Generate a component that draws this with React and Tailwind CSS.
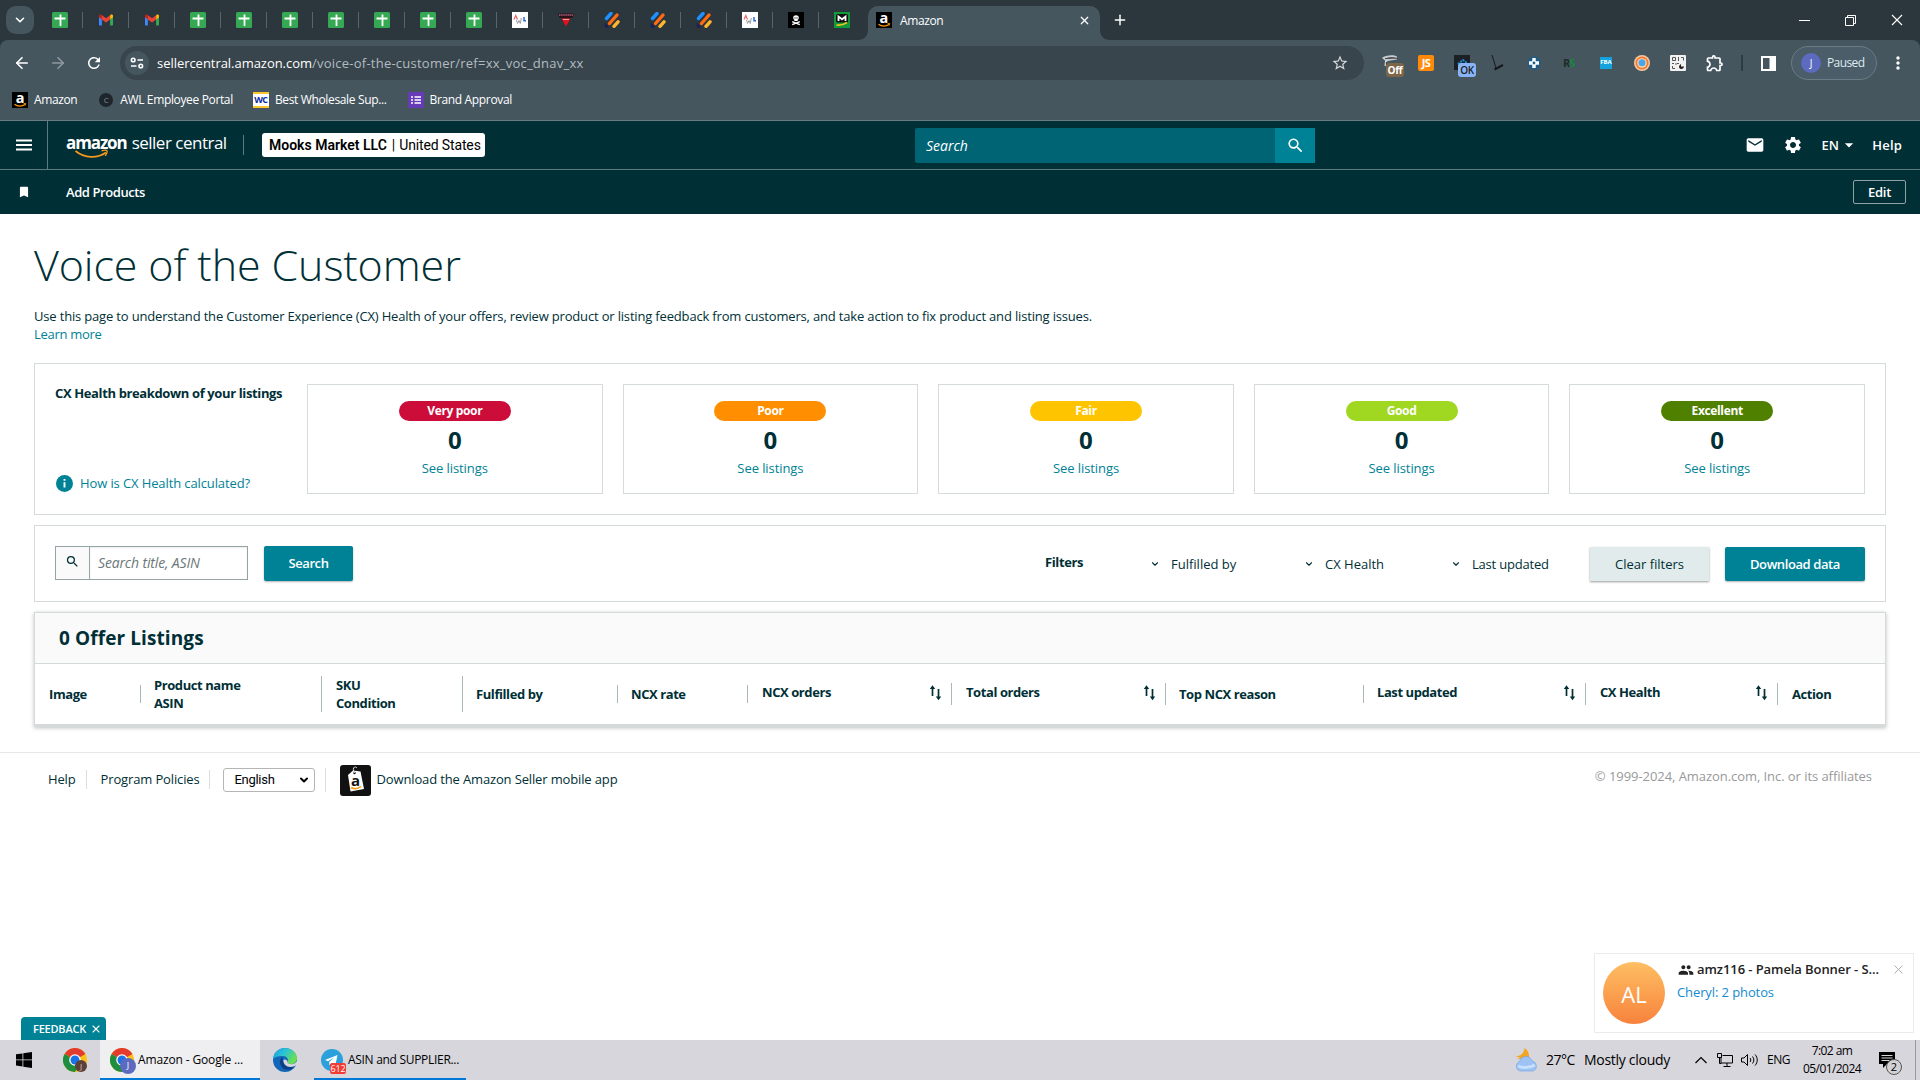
import { ArrowLeft, ArrowRight, ChevronDown, Plus, X } from "lucide-react"
import { MdRefresh, MdSettings, MdMail, MdStarBorder, MdMoreVert, MdPeople, MdSearch, MdBookmark, MdOutlineExtension, MdArrowDropDown } from "react-icons/md"

const tabs = ["sheets", "gmail", "gmail", "sheets", "sheets", "sheets", "sheets", "sheets", "sheets", "sheets", "awl", "devil", "stripes", "stripes", "stripes", "awl", "skull", "market"]

const ratings = [
  { label: "Very poor", color: "bg-[#cc0c39]" },
  { label: "Poor", color: "bg-[#ff8f00]" },
  { label: "Fair", color: "bg-[#ffc400]" },
  { label: "Good", color: "bg-[#a0d720]" },
  { label: "Excellent", color: "bg-[#508000]" }
]

const columns = [
  { lines: ["Image"], width: "w-[106px] pl-[14px]" },
  { lines: ["Product name", "ASIN"], width: "w-[181px] pl-[13px]" },
  { lines: ["SKU", "Condition"], width: "w-[141px] pl-[14px]" },
  { lines: ["Fulfilled by"], width: "w-[155px] pl-[13px]" },
  { lines: ["NCX rate"], width: "w-[130px] pl-[13px]" },
  { lines: ["NCX orders"], width: "w-[204px] pl-[14px]", sort: true },
  { lines: ["Total orders"], width: "w-[214px] pl-[14px]", sort: true },
  { lines: ["Top NCX reason"], width: "w-[198px] pl-[13px]" },
  { lines: ["Last updated"], width: "w-[222px] pl-[13px]", sort: true },
  { lines: ["CX Health"], width: "w-[192px] pl-[14px]", sort: true },
  { lines: ["Action"], width: "flex-1 pl-[14px]", last: true }
]

const AmazonIcon = () => (
  <svg width="16" height="16" viewBox="0 0 16 16" className="shrink-0 overflow-visible">
    <rect width="16" height="16" fill="#000" />
    <text x="8" y="10.6" textAnchor="middle" fontSize="14.5" fontWeight="700" fill="#fff" fontFamily="Open Sans, sans-serif">a</text>
    <path d="M2.500 12.200c3 2.400 7.500 2.400 10.500.3" stroke="#f90" strokeWidth="1.300" fill="none" />
    <path d="M11.600 11.600l2.200-.1-.8 2" stroke="#f90" strokeWidth=".9" fill="none" />
  </svg>
)

const Favicon = ({ kind }) => {
  if (kind === "sheets") {
    return (
      <svg width="16" height="16" viewBox="0 0 16 16">
        <rect width="16" height="16" rx="1.500" fill="#34a853" />
        <path d="M8.500 2.500V14M2.500 6.500h11" stroke="#fff" strokeWidth="1.800" />
      </svg>
    )
  }
  if (kind === "gmail") {
    return (
      <svg width="16" height="16" viewBox="0 0 16 16">
        <path d="M1 4.500v8.200c0 .5.4.8.8.8h2.100V7z" fill="#4285f4" />
        <path d="M15 4.500v8.200c0 .5-.4.8-.8.8h-2.100V7z" fill="#34a853" />
        <path d="M12.100 3.200v4.200L15 5.200V4c0-1.500-1.600-1.800-2.500-1.100z" fill="#fbbc04" />
        <path d="M1 5.200l2.900 2.200V3.200l-.4-.3C2.600 2.200 1 2.500 1 4z" fill="#c5221f" />
        <path d="M3.900 3.200L8 6.300l4.100-3.100v4.200L8 10.500 3.900 7.400z" fill="#ea4335" />
      </svg>
    )
  }
  if (kind === "awl") {
    return (
      <svg width="16" height="16" viewBox="0 0 16 16">
        <rect width="16" height="16" fill="#fff" />
        <path d="M2 7.500L3.800 3.500l1.700 4" stroke="#e46a6c" strokeWidth="1.200" fill="none" />
        <path d="M4.500 8l1 3.500L7 8.500l1.300 3L9.300 6" stroke="#9a9ea3" strokeWidth="1" fill="none" />
        <path d="M12 5v3.700h2" stroke="#2f6bd0" strokeWidth="1.500" fill="none" />
      </svg>
    )
  }
  if (kind === "devil") {
    return (
      <svg width="16" height="16" viewBox="0 0 16 16">
        <path d="M0 1.500h16L14.500 6h-13z" fill="#2a1218" />
        <path d="M1 3h14" stroke="#b0607a" strokeWidth="1.400" strokeDasharray="1.500 .6" />
        <path d="M3.500 6.500h9L8 14.500z" fill="#e8101c" />
        <path d="M5 7.500h6" stroke="#ffb0b0" strokeWidth=".9" />
      </svg>
    )
  }
  if (kind === "stripes") {
    return (
      <svg width="16" height="16" viewBox="0 0 16 16" strokeLinecap="round" strokeWidth="3.400">
        <path d="M.8 10.500v5h4.500z" fill="#1d1d5c" />
        <path d="M2.500 6.500l4.500-5" stroke="#1e90ff" />
        <path d="M5.500 11.500l7.500-8.500" stroke="#ff6a13" />
        <path d="M10 14.300l4-4.500" stroke="#ffb52e" />
      </svg>
    )
  }
  if (kind === "skull") {
    return (
      <svg width="16" height="16" viewBox="0 0 16 16">
        <rect width="16" height="16" fill="#000" />
        <path d="M5.200 5.700C5.200 2.500 10.800 2.500 10.800 5.700c0 1.300-.7 1.800-1.100 2.100v1.200H6.300V7.800c-.4-.3-1.100-.8-1.100-2.100z" fill="#fff" />
        <path d="M4.200 9.600l7.600 3M11.800 9.600l-7.600 3" stroke="#fff" strokeWidth="1.500" />
        <circle cx="7" cy="5.900" r=".6" /><circle cx="9" cy="5.900" r=".6" />
      </svg>
    )
  }
  return (
    <svg width="16" height="16" viewBox="0 0 16 16">
      <rect width="16" height="16" fill="#0f9a3c" />
      <rect x="2" y="2" width="12" height="8.500" rx="1.500" fill="#111" />
      <path d="M4.500 9V4.500L8 7.300l3.500-2.800V9" stroke="#fff" strokeWidth="1.800" fill="none" />
      <path d="M2.500 13c4 .6 7-.2 10.500-2.500" stroke="#f2c21a" strokeWidth="1.600" fill="none" />
    </svg>
  )
}

const TabStrip = () => (
  <div className="flex h-10 bg-[#2c373d] pl-[6px]">
    <div className="mt-[6px] flex h-7 w-7 items-center justify-center rounded-[10px] bg-[#45565f]">
      <ChevronDown size={14} strokeWidth={2.800} color="#fff" />
    </div>
    <div className="ml-[3px] flex">
      {tabs.map((kind, index) => (
        <div key={index} className="flex h-10 w-[46px] items-center pl-[15px]">
          <Favicon kind={kind} />
          {index < tabs.length - 1 && <span className="ml-[14px] h-4 w-px bg-[#55666f]" />}
        </div>
      ))}
    </div>
    <div className="relative ml-[3px] mt-[6px] flex h-[34px] w-[232px] items-center rounded-t-[10px] bg-[#45565f] pl-2">
      <svg className="absolute -left-[10px] bottom-0" width="10" height="10"><path d="M10 0v10H0C6 10 10 6 10 0z" fill="#45565f" /></svg>
      <svg className="absolute -right-[10px] bottom-0" width="10" height="10"><path d="M0 0v10h10C4 10 0 6 0 0z" fill="#45565f" /></svg>
      <div className="-mt-[6px]"><AmazonIcon /></div>
      <span className="-mt-[4px] ml-2 text-[12px] tracking-[-0.4px] text-white">Amazon</span>
      <X size={13} strokeWidth={2.200} color="#fff" className="-mt-[6px] ml-auto mr-[9px]" />
    </div>
    <Plus size={16} strokeWidth={2.200} color="#fff" className="ml-[12px] mt-3" />
    <div className="ml-auto flex items-center gap-[35px] pr-[17px]">
      <svg width="11" height="11"><path d="M0 5.500h11" stroke="#fff" /></svg>
      <svg width="11" height="11" fill="none" stroke="#fff"><path d="M.5 2.500h8v8h-8zM2.500 2.500v-2h8v8h-2" /></svg>
      <svg width="12" height="12" stroke="#fff" strokeWidth="1.100"><path d="M1 1l10 10M11 1L1 11" /></svg>
    </div>
  </div>
)

const Extensions = () => (
  <div className="flex items-center">
    <div className="relative ml-[17px] h-6 w-[26px]">
      <svg width="20" height="16" viewBox="0 0 20 16" className="mt-[3px]">
        <path d="M1 4c3-3 12-3.500 15-1.500v3L6.500 7 5 12H3.500L4 6.500z" fill="#c9cdd0" />
        <path d="M4 4.800c4-1.300 8-1.300 12-.5M5.500 8v5" stroke="#3a3f42" />
      </svg>
      <span className="absolute left-[5px] top-3 flex h-[14px] w-[18px] items-center justify-center rounded-[3px] bg-[#7d6548] text-[10px] font-bold leading-none tracking-[-0.3px] text-white">Off</span>
    </div>
    <div className="ml-[11px] flex h-4 w-4 items-center justify-center rounded-[2px] bg-[#ff8a0a] text-[11px] font-bold tracking-[-0.5px] text-white">JS</div>
    <div className="relative ml-5 h-6 w-6">
      <div className="mt-1 h-[15px] w-4 bg-[#1c1f24]"><svg width="16" height="15"><path d="M4 9l5-4 4 3" stroke="#1d8fd6" strokeWidth="2" fill="none" strokeDasharray="2 1" /></svg></div>
      <span className="absolute left-[4px] top-3 flex h-[14px] w-[18px] items-center justify-center rounded-[3px] bg-[#8ab4f8] text-[10px] font-semibold leading-none tracking-[-0.3px] text-[#202124]">OK</span>
    </div>
    <svg className="ml-[12px]" width="16" height="16" fill="none" stroke="#16191b"><path d="M2 0l4 13" /><path d="M4.500 14.500l8.500-4.500" strokeWidth="2" /></svg>
    <svg className="ml-5" width="16" height="16"><circle cx="8" cy="8" r="6.500" fill="#1e5c8a" /><path d="M8 3v10M3 8h10" stroke="#fff" strokeWidth="3.400" /><circle cx="8" cy="8" r="1.400" fill="#1e5c8a" /></svg>
    <div className="ml-[21px] w-4 text-[11px] font-bold leading-4 tracking-[-1px] text-[#1d2b2b]">R<span className="text-[#168a3a]">S</span></div>
    <div className="ml-[21px] flex h-3 w-3 flex-col items-center bg-[#14a3dc] text-[6px] font-bold leading-[10px] text-white">FBA</div>
    <svg className="ml-[22px]" width="16" height="16"><circle cx="8" cy="8" r="8" fill="#f6c7a2" /><circle cx="8" cy="8" r="6.500" fill="#f07a2a" /><circle cx="8" cy="8" r="4.800" fill="#f9d3b4" /><circle cx="8" cy="7.800" r="3.500" fill="#4aa6ea" /></svg>
    <svg className="ml-5" width="16" height="16"><rect width="16" height="16" rx="1" fill="#f1f1f1" /><path d="M2.500 2.500h3v3h-3zM8.500 2v4M11 2.500h2.500v3M2 8.500h2M6 8v2M2.500 11v2.500H5M7 8.500h2" stroke="#555" strokeWidth="1" fill="none" /><path d="M11 9v2.500h3c0 3-4.500 3.500-5 .5 0-1.500 1-2.500 2-3z" fill="#222" /></svg>
    <MdOutlineExtension className="ml-[19px]" size={20} color="#fff" />
    <span className="ml-[16px] h-4 w-[2px] bg-[#2f3c43]" />
    <svg className="ml-[18px]" width="15" height="15"><path d="M1 1h13v13H1z" fill="none" stroke="#fff" strokeWidth="2" /><path d="M8.500 1H14v13H8.500z" fill="#fff" /></svg>
  </div>
)

const Toolbar = () => (
  <div className="bg-[#2c373d]">
    <div className="flex h-12 items-center rounded-t-lg bg-[#45565f] pb-[2px] pl-[13px]">
      <ArrowLeft size={18} strokeWidth={2.200} color="#fff" />
      <ArrowRight size={18} strokeWidth={2.200} color="#8e999f" className="ml-[18px]" />
      <MdRefresh size={18} color="#fff" className="ml-[18px]" />
      <div className="ml-[17px] flex h-[34px] w-[1244px] items-center rounded-full bg-[#38454c] pl-[5px] pr-[15px]">
        <span className="flex h-6 w-6 items-center justify-center rounded-full bg-[#45565f]">
          <svg width="14" height="12" viewBox="0 0 14 12" fill="none" stroke="#fff" strokeWidth="1.600"><circle cx="3.200" cy="3" r="1.800" /><path d="M7.500 3H13M1 9h5.500" /><circle cx="10.800" cy="9" r="1.800" /></svg>
        </span>
        <span className="ml-2 pt-px text-[13px] tracking-[0.24px] text-[#b3bcc1]"><span className="tracking-[-0.04px] text-white">sellercentral.amazon.com</span>/voice-of-the-customer/ref=xx_voc_dnav_xx</span>
        <MdStarBorder size={18} color="#d3d8da" className="ml-auto" />
      </div>
      <Extensions />
      <div className="ml-[15px] flex h-[34px] w-[86px] items-center rounded-full border border-[#6b7c85] bg-[#4a5d68] pl-[9px]">
        <span className="flex h-5 w-5 items-center justify-center rounded-full bg-[#5c6bc0] text-[10px] text-white">J</span>
        <span className="ml-[6px] text-[12px] tracking-[-0.6px] text-[#dfeaf2]">Paused</span>
      </div>
      <MdMoreVert size={20} color="#fff" className="ml-[11px]" />
    </div>
    <div className="flex h-8 items-start bg-[#45565f] pl-3 pt-[4px] text-[12px] leading-4 tracking-[-0.35px] text-white">
      <AmazonIcon />
      <span className="ml-[6px] tracking-[-0.4px]">Amazon</span>
      <span className="ml-[22px] mt-px flex h-[14px] w-[14px] items-center justify-center rounded-full bg-[#1e252b] text-[8px] text-[#7d8a94]">C</span>
      <span className="ml-[7px]">AWL Employee Portal</span>
      <span className="ml-[20px] flex h-4 w-4 items-center justify-center border-y-2 border-[#fcc72c] bg-white text-[9px] font-bold tracking-[-0.5px] text-[#0c2ea0]">WC</span>
      <span className="ml-[6px]">Best Wholesale Sup...</span>
      <span className="ml-[21px] flex h-4 w-4 items-center justify-center bg-[#673ab7]">
        <svg width="10" height="8"><path d="M0 1h2M3.500 1H10M0 4h2M3.500 4H10M0 7h2M3.500 7H10" stroke="#fff" strokeWidth="1.500" /></svg>
      </span>
      <span className="ml-[6px]">Brand Approval</span>
    </div>
  </div>
)

const SellerHeader = () => (
  <header className="border-t border-[#6a7c80] bg-[#002f36] text-white">
    <div className="flex h-[49px] items-center border-b border-[#5c7a7f]">
      <div className="flex h-full w-12 items-center justify-center border-r border-[#5c7a7f]">
        <svg width="16" height="12" stroke="#fff" strokeWidth="1.800"><path d="M0 1.500h16M0 6h16M0 10.500h16" /></svg>
      </div>
      <div className="relative -mt-[5px] ml-[18px] flex w-[160px] items-baseline whitespace-nowrap text-[17px] leading-6">
        <span className="font-bold tracking-[-1.1px]">amazon</span>
        <span className="ml-[5px] tracking-[-0.5px]">seller central</span>
        <svg className="absolute left-[9px] top-[18px]" width="36" height="10" fill="none" stroke="#f7981d"><path d="M.5 2c9 7.500 22 7.500 30.500 1.500" strokeWidth="1.800" /><path d="M26.500 1.800c3-.8 5-.7 5.500 0 .4.800-.3 3-1.800 5" strokeWidth="1.300" /></svg>
      </div>
      <span className="ml-[17px] h-5 w-px bg-[#5c7a7f]" />
      <div className="ml-[18px] flex h-6 w-[223px] items-center rounded-[3px] bg-white pl-[7px] font-[Roboto,sans-serif] text-[14px] text-black">
        <span className="font-semibold">Mooks Market LLC</span>
        <span className="ml-[5px] mr-[4px]">|</span>
        <span className="tracking-[-0.14px]">United States</span>
      </div>
      <div className="ml-[430px] flex h-[35px] w-[400px]">
        <div className="flex flex-1 items-center rounded-l-[2px] bg-[#006475] pl-[11px] text-[14px] italic">Search</div>
        <div className="flex w-10 items-center justify-center bg-[#008296]"><MdSearch size={19} /></div>
      </div>
      <MdMail size={20} className="ml-auto" />
      <MdSettings size={20} className="ml-[18px]" />
      <span className="ml-[18px] pt-px text-[13px] font-semibold tracking-[0.2px]">EN</span>
      <MdArrowDropDown size={20} />
      <span className="ml-[13px] mr-[18px] pt-px text-[13px] font-semibold tracking-[0.2px]">Help</span>
    </div>
    <div className="flex h-11 items-center">
      <MdBookmark size={14} className="ml-[17px]" />
      <span className="ml-[35px] pt-[2px] text-[13px] font-semibold tracking-[-0.42px]">Add Products</span>
      <span className="ml-auto mr-[14px] flex h-6 w-[53px] items-center justify-center rounded-[2px] border border-[#8fa3a6] pt-[2px] text-[13px] font-semibold tracking-[-0.28px]">Edit</span>
    </div>
  </header>
)

const HealthBreakdown = () => (
  <section className="mt-[20px] flex h-[152px] border border-[#d5dbdb] pl-5 pr-5 pt-5">
    <div className="flex w-[252px] flex-col">
      <h2 className="text-[13px] font-bold leading-[18px] tracking-[-0.37px]">CX Health breakdown of your listings</h2>
      <div className="mt-[72px] flex items-center text-[#008296]">
        <svg width="17" height="17" className="ml-px"><circle cx="8.500" cy="8.500" r="8.500" fill="#008296" /><path d="M8.500 4v1.800M8.500 7.300v5.200" stroke="#fff" strokeWidth="1.900" /></svg>
        <span className="ml-[7px] text-[13px] leading-[18px] tracking-[-0.11px]">How is CX Health calculated?</span>
      </div>
    </div>
    <div className="flex flex-1 gap-5">
      {ratings.map((rating) => (
        <div key={rating.label} className="flex h-[110px] flex-1 flex-col items-center border border-[#d5dbdb] pt-4">
          <span className={`${rating.color} flex h-5 w-28 items-center justify-center rounded-[10px] text-[12px] font-bold tracking-[-0.35px] text-white`}>{rating.label}</span>
          <span className="mt-[5px] text-[24px] font-bold leading-7">0</span>
          <span className="mt-[5px] text-[13px] leading-[18px] tracking-[-0.08px] text-[#008296]">See listings</span>
        </div>
      ))}
    </div>
  </section>
)

const FilterDropdown = ({ label, className }) => (
  <div className={`flex items-center pt-[2px] ${className}`}>
    <ChevronDown size={10} strokeWidth={2.600} className="-mt-[2px]" />
    <span className="ml-[11px]">{label}</span>
  </div>
)

const FilterBar = () => (
  <section className="mt-[10px] flex h-[77px] items-center border border-[#d5dbdb] px-5 text-[13px]">
    <div className="-mt-[2px] flex h-[34px] w-[193px] border border-[#95a5a6]">
      <div className="flex w-[34px] items-center justify-center border-r border-[#95a5a6] bg-[#fafafa]"><MdSearch size={15} className="-mt-[3px]" /></div>
      <div className="flex flex-1 items-center pl-2 text-[14px] italic tracking-[-0.15px] text-[#6c7778] shadow-[inset_0_1px_2px_rgba(0,0,0,0.08)]">Search title, ASIN</div>
    </div>
    <button className="ml-[16px] h-[35px] w-[89px] rounded-[2px] bg-[#008296] font-semibold tracking-[-0.42px] text-white shadow-[0_1px_2px_rgba(0,0,0,0.3)]">Search</button>
    <span className="-mt-[2px] ml-auto font-bold tracking-[-0.4px]">Filters</span>
    <FilterDropdown label="Fulfilled by" className="ml-[67px] w-[154px]" />
    <FilterDropdown label="CX Health" className="w-[147px]" />
    <FilterDropdown label="Last updated" className="w-[139px] tracking-[-0.2px]" />
    <button className="h-[34px] w-[119px] bg-[#e2ebeb] pt-[2px] shadow-[0_1px_2px_rgba(0,0,0,0.4)]">Clear filters</button>
    <button className="ml-[16px] h-[34px] w-[140px] rounded-[2px] bg-[#008296] pt-[2px] font-semibold tracking-[-0.4px] text-white shadow-[0_1px_2px_rgba(0,0,0,0.3)]">Download data</button>
  </section>
)

const SortIcon = () => (
  <svg width="13" height="17" viewBox="0 0 13 17" className="-mt-[3px] ml-auto mr-[9px]" stroke="#002f36" strokeWidth="1.700" fill="none">
    <path d="M3.500 12V3M9.500 5v9" />
    <path d="M.8 5l2.700-3.800L6.200 5zM6.800 12.500l2.700 3.800 2.700-3.800z" fill="#002f36" stroke="none" />
  </svg>
)

const OffersTable = () => (
  <section className="mt-[10px] border border-b-[3px] border-[#d5dbdb] shadow-[0_1px_4px_rgba(0,0,0,0.25)]">
    <h2 className="flex h-[51px] items-center border-b border-[#d5dbdb] bg-[#fafafa] pl-6 text-[19px] font-bold tracking-[0.1px]">0 Offer Listings</h2>
    <div className="flex h-[60px] text-[13px] font-bold leading-[18px] tracking-[-0.42px]">
      {columns.map((col) => (
        <div key={col.lines[0]} className={`${col.width} flex items-center`}>
          <div className={col.sort ? "mb-[4px]" : ""}>
            {col.lines.map((line) => <div key={line} className="whitespace-nowrap">{line}</div>)}
          </div>
          {col.sort && <SortIcon />}
          {!col.last && <span className={`w-px bg-[#aab7b8] ${col.sort ? "h-[22px]" : col.lines.length > 1 ? "ml-auto h-9" : "ml-auto h-[18px]"}`} />}
        </div>
      ))}
    </div>
  </section>
)

const Footer = () => (
  <footer className="mt-[25px] flex h-[54px] items-center border-t border-[#e7e7e7] pl-12 text-[13px] tracking-[-0.14px]">
    <span>Help</span>
    <span className="ml-[10px] h-[19px] w-px bg-[#dddddd]" />
    <span className="ml-[14px]">Program Policies</span>
    <span className="ml-[9px] h-[19px] w-px bg-[#dddddd]" />
    <div className="ml-[13px] flex h-6 w-[92px] items-center rounded-[3px] border border-[#b5b5b5] pl-[11px] pr-[4px] font-[Roboto,sans-serif] text-[13px] tracking-[-0.29px] text-black">
      English
      <ChevronDown size={12} strokeWidth={4} className="ml-auto" />
    </div>
    <span className="ml-[10px] h-6 w-px bg-[#dddddd]" />
    <svg width="31" height="31" viewBox="0 0 31 31" className="ml-[14px] mt-[2px]">
      <rect width="31" height="31" rx="3" fill="#111" />
      <path d="M8 10l5-4.500 7.500 1L24 24l-13.500 2.500z" fill="#fff" />
      <circle cx="14.500" cy="8" r="1.200" fill="#111" />
      <path d="M14.500 8C12 4 14 0 17 3" stroke="#ddd" fill="none" />
      <text x="15.500" y="20.500" fontSize="15" fontWeight="700" textAnchor="middle" fill="#111" fontFamily="Open Sans, sans-serif">a</text>
      <path d="M11 22.500c3 1.800 7 1.400 10-1" stroke="#f90" strokeWidth="1.500" fill="none" />
    </svg>
    <span className="ml-[6px]">Download the Amazon Seller mobile app</span>
    <span className="-mt-[5px] ml-auto mr-12 tracking-[-0.06px] text-[#999]">© 1999-2024, Amazon.com, Inc. or its affiliates</span>
  </footer>
)

const ChromeIcon = () => (
  <svg width="24" height="24" viewBox="0 0 24 24">
    <circle cx="12" cy="12" r="12" fill="#fbc116" />
    <path d="M12 12L1.600 6A12 12 0 0 1 22.400 6z" fill="#e33b2e" />
    <path d="M12 12L1.600 6A12 12 0 0 0 12 24l5.200-9z" fill="#1e8e3e" />
    <circle cx="12" cy="12" r="5.800" fill="#fff" />
    <circle cx="12" cy="12" r="4.500" fill="#1a73e8" />
  </svg>
)

const Taskbar = () => (
  <div className="flex h-10 items-center bg-[#d7d6dc] text-[12px] text-black">
    <svg width="16" height="16" className="ml-4"><path d="M0 2.300l6.500-.9v6.100H0zM7.300 1.300L16 0v7.500H7.300zM0 8.300h6.500v6.200L0 13.600zM7.300 8.300H16V16l-8.700-1.300z" /></svg>
    <div className="relative ml-[31px]">
      <ChromeIcon />
      <span className="absolute left-3 top-3 flex h-3 w-3 items-center justify-center rounded-full bg-[#5d4037] text-[8px] text-[#d7ccc8]">J</span>
    </div>
    <div className="ml-[13px] flex h-10 w-[160px] items-center border-b-2 border-[#0078d7] bg-[#efeef1] pl-[10px] pt-[2px]">
      <div className="relative">
        <ChromeIcon />
        <span className="absolute left-[10px] top-[10px] flex h-4 w-4 items-center justify-center rounded-full bg-[#5c6bc0] text-[9px] text-white">J</span>
      </div>
      <span className="ml-[4px] whitespace-nowrap tracking-[-0.14px]">Amazon - Google ...</span>
    </div>
    <svg width="24" height="24" viewBox="0 0 24 24" className="ml-[13px]">
      <defs><linearGradient id="edge" x1="0" y1="0" x2="1" y2=".5"><stop stopColor="#1b9de2" /><stop offset=".5" stopColor="#2cc3d5" /><stop offset="1" stopColor="#6be04e" /></linearGradient></defs>
      <circle cx="12" cy="12" r="12" fill="#1267b8" />
      <path d="M0 11C1 4 6 0 12 0c7 0 12 5 12 10 0 4-3 6-6 6-2.500 0-4-1-3.500-2 1.500-2.500-.5-6-5-6C5 8 1.500 9 0 11z" fill="url(#edge)" />
      <path d="M9 9c-3 3-2.500 9 2 12 3 1.500 7 1 10.500-2-4 1-9-.5-11-4-.8-2-.6-4-1.500-6z" fill="#0a3f86" />
      <path d="M10.500 12c-.5 4 3 7 7 7 2 0 4-.800 5-1.500L24 16v-3c-2 3-5 3.500-7 3-2-.4-3-1.400-2.500-2.400.5-1.200-3-3-4-1.600z" fill="#d7d6dc" />
    </svg>
    <div className="ml-[17px] flex h-10 w-[152px] items-center border-b-2 border-[#0078d7] pl-[7px] pt-[2px]">
      <div className="relative">
        <svg width="22" height="22"><circle cx="11" cy="11" r="11" fill="#2ba0da" /><path d="M4 11l12.500-5-2.300 11-3.700-2.700-2 1.900-.3-3.200 5.300-4.800-6.500 4.100z" fill="#fff" /></svg>
        <span className="absolute left-[9px] top-[14px] flex h-[11px] w-4 items-center justify-center rounded-[2px] bg-[#f23c34] text-[9px] leading-none tracking-[-0.2px] text-white">612</span>
      </div>
      <span className="ml-[5px] whitespace-nowrap tracking-[-0.3px]">ASIN and SUPPLIER...</span>
    </div>
    <svg width="25" height="24" viewBox="0 0 25 24" className="ml-auto">
      <path d="M10.500 0c4.500 3 6 8 3 12l-11-1.500 4-.5L1.500 8C6 8.500 10 6 10.500 0z" fill="#f2a51f" />
      <path d="M6 23a5 5 0 0 1-.5-9.500A6.500 6.500 0 0 1 18 13a5.200 5.200 0 0 1 1 10z" fill="#9cc3f4" stroke="#6f9fe2" strokeWidth=".6" />
      <path d="M4 18c4 2 12 2 17-1" stroke="#c8e0fb" strokeWidth="3" fill="none" />
    </svg>
    <span className="ml-[7px] text-[14px] leading-5 tracking-[-0.46px]">27°C</span>
    <span className="ml-[9px] text-[14px] leading-5 tracking-[-0.28px]">Mostly cloudy</span>
    <svg width="12" height="8" className="ml-[25px]"><path d="M.5 7L6 1.500 11.500 7" stroke="#000" strokeWidth="1.200" fill="none" /></svg>
    <svg width="16" height="14" className="ml-[10px]" fill="none" stroke="#000"><path d="M5.500 2.500h10v7.500H4M4 4.500v6M10 10v3M6.500 13.500h7M.5.500h4v4h-4zM2.500 4.500V10.500H4" /></svg>
    <svg width="17" height="14" className="ml-[8px]" fill="none" stroke="#000"><path d="M.5 5h2.500L6.500 1.500v11L3 9H.5zM9 5c1 1.200 1 2.800 0 4M11.500 3.500c1.800 2 1.800 5 0 7M14 1.500c3 3.200 3 7.800 0 11" /></svg>
    <span className="ml-[9px] tracking-[-0.48px]">ENG</span>
    <div className="ml-[13px] flex w-[58px] flex-col items-center text-[12px] leading-[18px] tracking-[-0.57px]">
      <span>7:02 am</span>
      <span>05/01/2024</span>
    </div>
    <div className="relative ml-[18px] mr-[20px] h-6 w-4">
      <svg width="16" height="16" className="mt-[4px]"><path d="M0 0h16v12H8l-4 4v-4H0z" /><path d="M2.500 3.500h11M2.500 6h11M2.500 8.500h8" stroke="#d7d6dc" /></svg>
      <span className="absolute left-[7px] top-[11px] flex h-4 w-4 items-center justify-center rounded-full border border-[#555] bg-[#d2d1d4] text-[11px]">2</span>
    </div>
    <span className="mr-[4px] h-10 w-px bg-[#9a9a9e]" />
  </div>
)

const ChatToast = () => (
  <div className="absolute bottom-[47px] right-[6px] flex h-20 w-[320px] border border-[#ebebeb] bg-white pl-2 pt-2">
    <div className="flex h-[62px] w-[62px] items-center justify-center rounded-full bg-linear-to-b from-[#fdbe62] to-[#f7823c] pt-[2px] text-[22px] text-white">AL</div>
    <div className="-mt-[2px] ml-[12px]">
      <div className="flex items-center text-[13px] font-semibold tracking-[-0.08px] text-[#222]">
        <MdPeople size={16} className="ml-px mr-[3px]" />
        amz116 - Pamela Bonner - S...
      </div>
      <div className="mt-[3px] text-[13px] tracking-[-0.1px] text-[#168acd]">Cheryl: 2 photos</div>
    </div>
    <X size={15} strokeWidth={1.500} color="#aaa" className="ml-auto mr-[7px]" />
  </div>
)

const App = () => {
  return (
    <div className="relative flex h-[1080px] w-[1920px] flex-col overflow-hidden bg-white font-['Open_Sans',sans-serif] text-[#002f36]">
      <TabStrip />
      <Toolbar />
      <SellerHeader />
      <main className="mx-[34px] pt-[24px]">
        <h1 className="text-[43px] font-light leading-[54px] tracking-[-0.1px]">Voice of the Customer</h1>
        <p className="mt-[15px] whitespace-nowrap text-[13px] leading-[18px] tracking-[-0.17px]">Use this page to understand the Customer Experience (CX) Health of your offers, review product or listing feedback from customers, and take action to fix product and listing issues.</p>
        <p className="text-[13px] leading-[18px] tracking-[-0.3px] text-[#008296]">Learn more</p>
        <HealthBreakdown />
        <FilterBar />
        <OffersTable />
      </main>
      <Footer />
      <div className="mt-auto">
        <div className="ml-[21px] flex h-[23px] w-[85px] items-center rounded-t-[4px] bg-[#008296] pl-3 pt-px text-[11px] font-semibold tracking-[-0.21px] text-white">
          FEEDBACK
          <X size={12} strokeWidth={2.200} className="ml-[4px]" />
        </div>
        <Taskbar />
      </div>
      <ChatToast />
    </div>
  )
}

export default App
